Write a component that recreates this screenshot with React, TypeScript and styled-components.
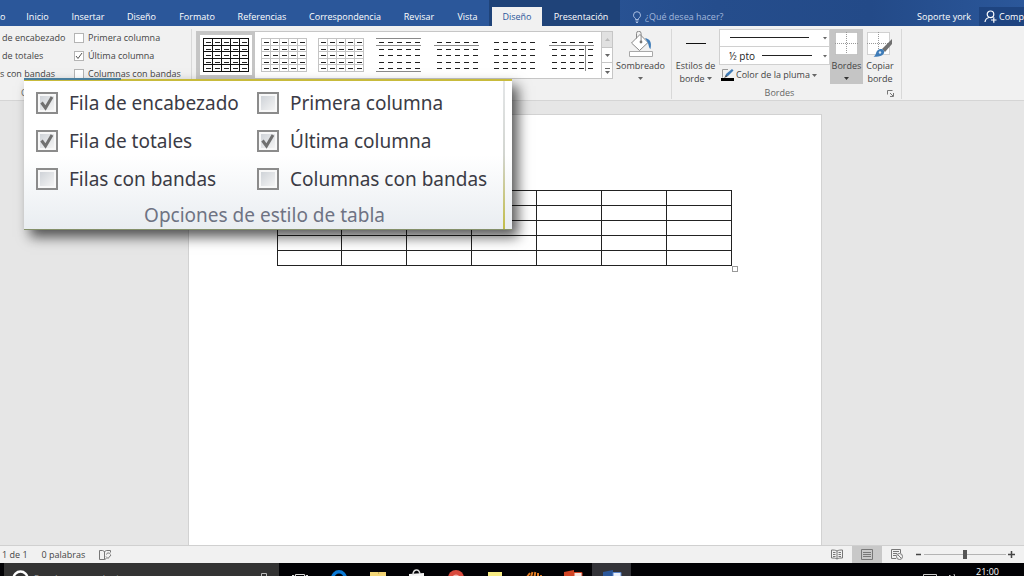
import React from "react";
import styled, { createGlobalStyle } from "styled-components";

const Global = createGlobalStyle`
  * { box-sizing: border-box; }
  body { margin: 0; overflow: hidden; }
  button, input, select { font: inherit; color: inherit; margin: 0; padding: 0; border: 0; background: none; }
  svg { display: block; flex-shrink: 0; }
`;

const Shell = styled.div`
  position: relative;
  display: flex;
  flex-direction: column;
  height: 100vh;
  overflow: hidden;
  background: #e6e6e6;
  color: #444;
  font: 9px/12px "Open Sans", "Noto Sans", sans-serif;
`;

/* ---------- tab bar ---------- */

const TabBar = styled.header`
  display: flex;
  flex: 0 0 26px;
  align-items: stretch;
  color: #fff;
  background: linear-gradient(90deg, #2b579a 50%, #254d8c 70%, #234a88 85%, #2b579a);
`;

const Tab = styled.button<{ $w: number }>`
  flex: 0 0 ${(p) => p.$w}px;
  padding-top: 7px;
  text-align: center;
  white-space: nowrap;
`;

const CutTab = styled(Tab)`
  text-align: left;
`;

const ContextTabs = styled.div`
  display: flex;
  padding: 7px 0 0 3px;
  background: #1f4379;
`;

const ContextTab = styled.button<{ $w: number; $active?: boolean }>`
  flex: 0 0 ${(p) => p.$w}px;
  text-align: center;
  color: ${(p) => (p.$active ? "#2b579a" : "#fff")};
  background: ${(p) => (p.$active ? "#f1f1f1" : "transparent")};
`;

const TellMe = styled.label`
  display: flex;
  flex: 1;
  align-items: center;
  gap: 2px;
  padding: 7px 0 0 11px;
  input {
    width: 90px;
    color: #a9bde0;
    outline: 0;
  }
  input::placeholder { color: #a2b7db; opacity: 1; }
`;

const Account = styled.button`
  padding: 7px 8px 0 0;
`;

const Share = styled.button`
  display: flex;
  flex: 0 0 45px;
  align-items: center;
  gap: 2px;
  margin-top: 7px;
  padding-left: 5px;
  overflow: hidden;
  background: #1e4480;
`;

/* ---------- ribbon ---------- */

const Ribbon = styled.section`
  display: flex;
  flex: 0 0 75px;
  padding-top: 3px;
  background: #f1f1f1;
  border-bottom: 1px solid #d5d5d5;
`;

const Group = styled.div<{ $w: number }>`
  display: flex;
  flex: 0 0 ${(p) => p.$w}px;
  flex-direction: column;
  justify-content: space-between;
  border-right: 1px solid #d8d8d8;
  margin-bottom: 1px;
`;

const GroupBody = styled.div`
  display: flex;
  align-items: flex-start;
`;

const Caption = styled.div`
  display: flex;
  align-items: center;
  justify-content: center;
  height: 12px;
  color: #666;
`;

const OptionsCaption = styled(Caption)`
  justify-content: flex-start;
  padding-left: 21px;
`;

const BordersCaption = styled(Caption)`
  display: grid;
  grid-template-columns: 1fr auto 1fr 14px;
  > span { grid-column: 2; }
  > button { grid-column: 4; }
`;

const OptionGrid = styled.div`
  display: grid;
  grid-template-columns: 74px 117px;
  grid-auto-rows: 18px;
  align-items: center;
  white-space: nowrap;
`;

const SmallOption = styled.label`
  display: flex;
  align-items: center;
  gap: 4px;
`;

const CutLabel = styled.span<{ $pad: number }>`
  padding-left: ${(p) => p.$pad}px;
`;

const CheckCell = styled.span`
  display: grid;
  place-items: center;
  > * { grid-area: 1 / 1; }
  svg { pointer-events: none; }
`;

const SmallBox = styled.input`
  appearance: none;
  width: 10px;
  height: 10px;
  background: #fff;
  border: 1px solid #b4b4b4;
`;

const Gallery = styled.div`
  display: flex;
  width: 417px;
  height: 48px;
  margin: 2px 0 0 4px;
  background: #fff;
  border: 1px solid #c6c6c6;
`;

const StyleThumb = styled.button<{ $selected?: boolean }>`
  display: flex;
  flex: 1;
  justify-content: center;
  min-width: 0;
  padding-top: 3px;
  border: 3px solid ${(p) => (p.$selected ? "#c5c5c5" : "transparent")};
`;

const Scroller = styled.div`
  display: flex;
  flex-direction: column;
  width: 11px;
  border-left: 1px solid #c6c6c6;
`;

const ScrollButton = styled.button<{ $off?: boolean }>`
  display: grid;
  place-items: center;
  flex: 1;
  background: ${(p) => (p.$off ? "#e1e1e1" : "#fff")};
  & + & { border-top: 1px solid #c6c6c6; }
`;

const BigButton = styled.button<{ $w: number; $active?: boolean }>`
  display: flex;
  flex-direction: column;
  align-items: center;
  width: ${(p) => p.$w}px;
  height: 55px;
  padding-top: 2px;
  line-height: 13px;
  white-space: nowrap;
  background: ${(p) => (p.$active ? "#c5c5c5" : "transparent")};
`;

const WithCaret = styled.span`
  display: flex;
  align-items: center;
  gap: 2px;
`;

const CaretLine = styled.span`
  display: grid;
  place-items: center;
  height: 12px;
`;

const PenColumn = styled.div`
  width: 111px;
`;

const SelectBox = styled.label`
  display: grid;
  height: 18px;
  align-items: center;
  background: #fff;
  border: 1px solid #d0d0d0;
  & + & { border-top: 0; }
  > * { grid-area: 1 / 1; }
  svg { pointer-events: none; }
`;

const Select = styled.select`
  appearance: none;
  width: 100%;
  height: 16px;
  padding-left: 9px;
  color: #222;
  font-size: 10px;
`;

const PenColor = styled.button`
  display: flex;
  align-items: center;
  gap: 2px;
  height: 20px;
  padding-left: 2px;
  white-space: nowrap;
`;

/* ---------- document ---------- */

const Workspace = styled.main`
  display: flex;
  flex: 1;
  justify-content: center;
  min-height: 0;
  padding: 13px 15px 0 0;
`;

const Page = styled.article`
  width: 634px;
  padding: 75px 83px 0 88px;
  background: #fff;
  border: 1px solid #d2d2d2;
  border-bottom: 0;
`;

const TableWrap = styled.div`
  display: flex;
  flex-direction: column;
  padding-right: 6px;
`;

const DocTable = styled.table`
  width: 100%;
  table-layout: fixed;
  border-collapse: collapse;
  td {
    height: 15px;
    padding: 0;
    border: 1px solid #222;
  }
`;

const ResizeHandle = styled.span`
  align-self: flex-end;
  width: 6px;
  height: 6px;
  margin-right: -6px;
  border: 1px solid #999;
`;

/* ---------- status bar and taskbar ---------- */

const StatusBar = styled.footer`
  display: flex;
  flex: 0 0 18px;
  align-items: center;
  padding: 0 9px 0 2px;
  background: #f1f1f1;
  border-top: 1px solid #d0d0d0;
`;

const StatusText = styled.span`
  margin-right: 14px;
`;

const ViewButton = styled.button<{ $active?: boolean }>`
  display: grid;
  place-items: center;
  width: 30px;
  height: 17px;
  background: ${(p) => (p.$active ? "#c8c8c8" : "transparent")};
`;

const Views = styled.div`
  display: flex;
  margin-left: auto;
`;

const ZoomControl = styled.div`
  display: flex;
  align-items: center;
  gap: 2px;
  padding-left: 3px;
`;

const ZoomRange = styled.input`
  appearance: none;
  width: 82px;
  height: 12px;
  background: linear-gradient(#b4b4b4, #b4b4b4) center / 100% 1px no-repeat;
  &::-webkit-slider-thumb {
    appearance: none;
    width: 4px;
    height: 9px;
    background: #555;
  }
`;

const Taskbar = styled.nav`
  display: flex;
  flex: 0 0 13px;
  align-items: flex-start;
  overflow: hidden;
  color: #fff;
  background: #020205;
`;

const SearchBox = styled.button`
  display: flex;
  align-items: flex-start;
  width: 275px;
  height: 13px;
  margin: 0 1px 0 4px;
  padding: 7px 8px 0 8px;
  gap: 5px;
  color: #a0a0a0;
  background: #333;
  > span { padding-top: 3px; }
  > svg:last-child { margin: 3px 4px 0 auto; }
`;

const TaskItem = styled.button<{ $active?: boolean }>`
  display: flex;
  justify-content: center;
  width: 39px;
  height: 13px;
  padding-top: 6px;
  overflow: hidden;
  background: ${(p) => (p.$active ? "#333338" : "transparent")};
`;

const Tray = styled.div`
  display: flex;
  align-items: flex-start;
  gap: 7px;
  margin-left: auto;
  padding: 3px 25px 0 0;
  > svg { margin-top: 8px; }
`;

const Clock = styled.time`
  padding-left: 13px;
`;

/* ---------- magnified options panel ---------- */

const Magnified = styled.section`
  position: absolute;
  top: 79px;
  left: 24px;
  width: 488px;
  padding: 3px 0 0 12px;
  color: #3b3b45;
  font: 19px/24px "Noto Sans", "Open Sans", sans-serif;
  background: linear-gradient(#fff 50%, #e9edf1);
  border-top: 2px solid #c8bb3c;
  border-bottom: 1px solid #84906a;
  box-shadow: 6px 7px 12px rgba(0, 0, 0, 0.65);
`;

const BlueEdge = styled.i`
  position: absolute;
  top: -3px;
  left: 0;
  width: 97px;
  height: 2px;
  background: #4a7f9e;
`;

const YellowEdge = styled.i`
  position: absolute;
  top: 0;
  bottom: 0;
  left: 479px;
  width: 2px;
  background: linear-gradient(#e4e6e8, #d2d5d0 50%, #c2bd4a);
`;

const MagnifiedGrid = styled.div`
  display: grid;
  grid-template-columns: 221px 1fr;
  grid-auto-rows: 38px;
`;

const BigOption = styled.label`
  display: flex;
  align-items: center;
  gap: 11px;
  white-space: nowrap;
`;

const BigBox = styled.input`
  appearance: none;
  width: 22px;
  height: 22px;
  border: 2px solid #8b8b8b;
  padding: 2px;
  background:
    linear-gradient(135deg, #cfd3d8, #f4f4f4) content-box,
    #f8f8f8;
`;

const MagnifiedCaption = styled.div`
  height: 31px;
  padding: 5px 19px 0 0;
  text-align: center;
  color: #6e7383;
`;

/* ---------- drawings ---------- */

const Caret = ({ color = "#666" }: { color?: string }) => (
  <svg width="5" height="3" viewBox="0 0 5 3"><path d="M0 0h5L2.5 3z" fill={color} /></svg>
);

function Thumb({ kind }: { kind: number }) {
  const rows = [3, 10, 16, 23, 29];
  const cols = [0, 1, 2, 3, 4];
  const grid = kind < 3;
  const stroke = kind === 0 ? "#111" : grid ? "#c4c4c4" : "#8a8a8a";
  return (
    <svg width="46" height="34" viewBox="0 0 46 34" shapeRendering="crispEdges">
      {grid && (
        <g stroke={stroke} fill="none">
          {[0, 7, 13, 20, 26, 33].map((y) => <path key={y} d={`M0 ${y + 0.5}h46`} />)}
          {[0, 9, 18, 27, 36, 45].map((x) => <path key={x} d={`M${x + 0.5} 0v34`} />)}
        </g>
      )}
      {kind === 3 && <path d="M0 .5h45M0 7.5h45M0 33.5h45" stroke={stroke} />}
      {(kind === 4 || kind === 6) && <path d="M0 7.5h45" stroke={stroke} />}
      {kind === 6 && <path d="M36.500 7v26" stroke={stroke} />}
      {rows.map((y) => cols.map((c) => (
        <path key={`${y}-${c}`} d={`M${c * 9 + 3} ${y + 1.5}h5`} stroke="#222" />
      )))}
    </svg>
  );
}

const BulbIcon = () => (
  <svg width="12" height="12" viewBox="0 0 12 12" fill="none" stroke="#a9bde0">
    <path d="M4.500 8.500V7.400C3.200 6.600 2.500 5.600 2.500 4.200a3.500 3.500 0 0 1 7 0c0 1.400-.7 2.400-2 3.200v1.100zM4.500 10h3M5 11.500h2" />
  </svg>
);

const PersonIcon = () => (
  <svg width="13" height="13" viewBox="0 0 13 13" fill="none" stroke="#fff" strokeWidth="1.200">
    <circle cx="6.500" cy="4.300" r="3.300" />
    <path d="M1 12c.3-2.500 1.700-4 4-4.500M7 10h5.500M9.800 7.300v5.400" />
  </svg>
);

const BucketIcon = () => (
  <svg width="26" height="28" viewBox="0 0 26 28" fill="none">
    <path d="M1.500 20.500h23v5h-23z" fill="#fff" stroke="#a8a8a8" />
    <path d="M3.500 12L12 3.500l8 8-8.500 8z" fill="#fff" stroke="#888" />
    <path d="M8.500 7.500V2.500a2.300 2.300 0 0 1 4.600 0V10" stroke="#888" />
    <circle cx="13" cy="11" r="1.400" fill="#777" />
    <path d="M17 7c5 1 7 4 5.500 11-1.500-.4-1.500-3-2.500-6z" fill="#3f7cb8" />
  </svg>
);

const BordersIcon = () => (
  <svg width="24" height="28" viewBox="0 0 24 28">
    <path d="M.5 1.500h22v22h-22z" fill="#fff" stroke="#aaa" strokeDasharray="1 1" />
    <path d="M11.500 1v22M0 12.500h23" stroke="#999" strokeDasharray="1 1" />
  </svg>
);

const CopyBorderIcon = () => (
  <svg width="26" height="28" viewBox="0 0 26 28">
    <path d="M.5 1.500h22v22h-22z" fill="#fff" stroke="#aaa" strokeDasharray="1 1" />
    <path d="M11.500 1v22M0 12.500h23" stroke="#999" strokeDasharray="1 1" />
    <path d="M25 8v5l-7 8-3-3z" fill="#707070" />
    <path d="M14.500 18c2.500.7 3.500 3 2 5-2 2.500-6 3-10 2.500 3-1 2-5 4.500-6.500 1-.8 2-1.200 3.500-1z" fill="#3f7cb8" />
    <circle cx="13" cy="21.500" r="1.200" fill="#dce9f5" />
  </svg>
);

const StyleLineIcon = () => (
  <svg width="22" height="28" viewBox="0 0 22 28" shapeRendering="crispEdges"><path d="M1 12h20" stroke="#111" strokeWidth="1" /></svg>
);

const PenIcon = () => (
  <svg width="13" height="14" viewBox="0 0 13 14">
    <path d="M7 1.500H1.500v8" fill="none" stroke="#999" />
    <path d="M4 9l1-3 6-5 1.500 1.500L7 8z" fill="#3f7cb8" />
    <path d="M3 10l2-3 1.500 1.500z" fill="#555" />
    <path d="M0 10h13v3H0z" fill="#000" />
  </svg>
);

const LauncherIcon = () => (
  <svg width="7" height="7" viewBox="0 0 7 7" fill="none" stroke="#777">
    <path d="M.5 4.500v-4h5M3 3l3 3M6.500 3v3.500H3" />
  </svg>
);

const ProofIcon = () => (
  <svg width="13" height="12" viewBox="0 0 13 12" fill="none" stroke="#777">
    <path d="M5.500 10.500h-5v-9h3l2 1zM5.500 2.500l2-1h4v2" />
    <path d="M5.500 10.500l2-1M7 7.500l2 2 3-3.500M7.500 5.500c0-2 3.500-2 4 0" />
  </svg>
);

const ReadIcon = () => (
  <svg width="12" height="11" viewBox="0 0 12 11" fill="none" stroke="#777">
    <path d="M6 2c-1.500-1-3.500-1-5.500-1v8c2 0 4 0 5.500 1 1.500-1 3.500-1 5.500-1V1c-2 0-4 0-5.500 1zv8M2 3.500h2.500M2 5.500h2.500M2 7.500h2.500M7.500 3.500H10M7.500 5.500H10M7.500 7.500H10" />
  </svg>
);

const PrintIcon = () => (
  <svg width="12" height="11" viewBox="0 0 12 11" fill="none" stroke="#777">
    <path d="M.5.5h11v10H.5zM2 3.500h8M2 5.500h8M2 7.500h8" />
  </svg>
);

const WebIcon = () => (
  <svg width="12" height="11" viewBox="0 0 12 11" fill="none" stroke="#777">
    <path d="M5 9.500H.5v-9h9V4M2 2.500h6M2 4.500h4M2 6.500h3" />
    <circle cx="8.500" cy="7.500" r="3" />
    <path d="M7 6l3 3" />
  </svg>
);

const SelectArt = ({ from, to }: { from: number; to: number }) => (
  <svg width="109" height="16" viewBox="0 0 109 16">
    <path d={`M${from} 7.500H${to}`} stroke="#222" />
    <path d="M103 7h4l-2 2.500z" fill="#666" />
  </svg>
);

const taskApps = [
  { name: "Vista de tareas", icon: <svg width="18" height="18" viewBox="0 0 18 18" fill="none" stroke="#ddd"><path d="M4.500 5.500h9v8h-9zM1 6.500h2v6M17 6.500h-2v6" /></svg> },
  { name: "Edge", icon: <svg width="18" height="18" viewBox="0 0 18 18" fill="none" stroke="#0a78d4" strokeWidth="3.500"><circle cx="9" cy="9" r="6.200" /></svg> },
  { name: "Explorador", icon: <svg width="18" height="18" viewBox="0 0 18 18"><path d="M1 3h8l1 2h7v11H1z" fill="#f3d778" /><path d="M9 3h8v2h-7z" fill="#f0d070" /></svg> },
  { name: "Tienda", icon: <svg width="18" height="18" viewBox="0 0 18 18"><path d="M1 5l15-1v12H1z" fill="#f4f4f4" /><path d="M5 6c0-6 6-7 7-1" fill="none" stroke="#ddd" strokeWidth="1.500" /></svg> },
  { name: "Chrome", icon: <svg width="18" height="18" viewBox="0 0 18 18"><circle cx="9" cy="9" r="8" fill="#d94a3d" /><circle cx="9" cy="9" r="3.500" fill="#f0b0a8" /></svg> },
  { name: "Notas", icon: <svg width="18" height="18" viewBox="0 0 18 18"><path d="M2 3h14v13H2z" fill="#f7ec84" /></svg> },
  { name: "Aplicación", icon: <svg width="18" height="18" viewBox="0 0 18 18" fill="none" stroke="#e07b22" strokeWidth="2"><path d="M2 8l3-4M6 8l1.500-5M9.500 8l.8-5M13 8V4M16 9V6" /></svg> },
  { name: "PowerPoint", icon: <svg width="20" height="18" viewBox="0 0 20 18"><path d="M1 3l10-2v16L1 15z" fill="#d14424" /><path d="M11 3.500h8v12h-8z" fill="#f4e4de" stroke="#d14424" /></svg> },
  { name: "Word", icon: <svg width="20" height="18" viewBox="0 0 20 18"><path d="M1 3l10-2v16L1 15z" fill="#2b579a" /><path d="M11 3.500h8v12h-8z" fill="#e9effa" stroke="#5b85c8" /></svg> },
];

const tabs: [string, number][] = [
  ["Inicio", 47], ["Insertar", 54], ["Diseño", 53], ["Formato", 58], ["Referencias", 72],
  ["Correspondencia", 94], ["Revisar", 54], ["Vista", 43],
];

function SmallCheck({ label, checked }: { label: string; checked?: boolean }) {
  return (
    <SmallOption>
      <CheckCell>
        <SmallBox type="checkbox" defaultChecked={checked} />
        {checked && <svg width="8" height="8" viewBox="0 0 8 8"><path d="M1 4l2 2.500L7 1" fill="none" stroke="#555" /></svg>}
      </CheckCell>
      {label}
    </SmallOption>
  );
}

function BigCheck({ label, checked }: { label: string; checked?: boolean }) {
  return (
    <BigOption>
      <CheckCell>
        <BigBox type="checkbox" defaultChecked={checked} />
        {checked && (
          <svg width="16" height="16" viewBox="0 0 16 16">
            <path d="M2.500 7.500l4 5.500L13 2" fill="none" stroke="#707070" strokeWidth="3" />
          </svg>
        )}
      </CheckCell>
      {label}
    </BigOption>
  );
}

export default function App() {
  return (
    <Shell>
      <Global />
      <TabBar>
        <CutTab $w={14}>o</CutTab>
        {tabs.map(([name, w], i) => <Tab key={i} $w={w}>{name}</Tab>)}
        <ContextTabs>
          <ContextTab $w={50} $active>Diseño</ContextTab>
          <ContextTab $w={78}>Presentación</ContextTab>
        </ContextTabs>
        <TellMe>
          <BulbIcon />
          <input aria-label="¿Qué desea hacer?" placeholder="¿Qué desea hacer?" />
        </TellMe>
        <Account>Soporte york</Account>
        <Share aria-label="Compartir"><PersonIcon />Comp</Share>
      </TabBar>

      <Ribbon>
        <Group $w={192}>
          <OptionGrid>
            <CutLabel $pad={2}>de encabezado</CutLabel>
            <SmallCheck label="Primera columna" />
            <CutLabel $pad={2}>de totales</CutLabel>
            <SmallCheck label="Última columna" checked />
            <CutLabel $pad={0}>s con bandas</CutLabel>
            <SmallCheck label="Columnas con bandas" />
          </OptionGrid>
          <OptionsCaption>Opciones</OptionsCaption>
        </Group>

        <Group $w={480}>
          <GroupBody>
            <Gallery>
              {[0, 1, 2, 3, 4, 5, 6].map((k) => (
                <StyleThumb key={k} $selected={k === 0} aria-label={`Estilo ${k + 1}`}><Thumb kind={k} /></StyleThumb>
              ))}
              <Scroller>
                <ScrollButton $off aria-label="Subir">
                  <svg width="5" height="3" viewBox="0 0 5 3"><path d="M0 3h5L2.500 0z" fill="#bbb" /></svg>
                </ScrollButton>
                <ScrollButton aria-label="Bajar"><Caret /></ScrollButton>
                <ScrollButton aria-label="Más">
                  <svg width="5" height="6" viewBox="0 0 5 6"><path d="M0 .5h5" stroke="#666" /><path d="M0 3h5L2.500 6z" fill="#666" /></svg>
                </ScrollButton>
              </Scroller>
            </Gallery>
            <BigButton $w={55}>
              <BucketIcon />
              Sombreado
              <CaretLine><Caret /></CaretLine>
            </BigButton>
          </GroupBody>
        </Group>

        <Group $w={230}>
          <GroupBody>
            <BigButton $w={47}>
              <StyleLineIcon />
              Estilos de
              <WithCaret>borde <Caret /></WithCaret>
            </BigButton>
            <PenColumn>
              <SelectBox>
                <Select aria-label="Estilo de pluma"><option></option></Select>
                <SelectArt from={10} to={89} />
              </SelectBox>
              <SelectBox>
                <Select aria-label="Grosor de pluma"><option>½ pto</option></Select>
                <SelectArt from={42} to={92} />
              </SelectBox>
              <PenColor><PenIcon />Color de la pluma<Caret /></PenColor>
            </PenColumn>
            <BigButton $w={33} $active>
              <BordersIcon />
              Bordes
              <CaretLine><Caret color="#333" /></CaretLine>
            </BigButton>
            <BigButton $w={34}>
              <CopyBorderIcon />
              Copiar
              <span>borde</span>
            </BigButton>
          </GroupBody>
          <BordersCaption>
            <span>Bordes</span>
            <button aria-label="Más opciones de bordes"><LauncherIcon /></button>
          </BordersCaption>
        </Group>
      </Ribbon>

      <Workspace>
        <Page>
          <TableWrap>
            <DocTable>
              <tbody>
                {[0, 1, 2, 3, 4].map((r) => (
                  <tr key={r}>{[0, 1, 2, 3, 4, 5, 6].map((c) => <td key={c} />)}</tr>
                ))}
              </tbody>
            </DocTable>
            <ResizeHandle />
          </TableWrap>
        </Page>
      </Workspace>

      <StatusBar>
        <StatusText>1 de 1</StatusText>
        <StatusText>0 palabras</StatusText>
        <ProofIcon />
        <Views>
          <ViewButton aria-label="Modo de lectura"><ReadIcon /></ViewButton>
          <ViewButton $active aria-label="Diseño de impresión"><PrintIcon /></ViewButton>
          <ViewButton aria-label="Diseño web"><WebIcon /></ViewButton>
        </Views>
        <ZoomControl>
          <button aria-label="Alejar"><svg width="7" height="7" viewBox="0 0 7 7"><path d="M1 3.500h5" stroke="#444" strokeWidth="1.500" /></svg></button>
          <ZoomRange type="range" aria-label="Zoom" defaultValue={50} />
          <button aria-label="Acercar"><svg width="7" height="7" viewBox="0 0 7 7"><path d="M0 3.500h7M3.500 0v7" stroke="#444" strokeWidth="1.500" /></svg></button>
        </ZoomControl>
      </StatusBar>

      <Taskbar>
        <SearchBox aria-label="Buscar">
          <svg width="17" height="17" viewBox="0 0 17 17"><circle cx="8.500" cy="8.500" r="7" fill="none" stroke="#fff" strokeWidth="2.400" /></svg>
          <span>Pregúntame cualquier cosa</span>
          <svg width="6" height="10" viewBox="0 0 6 10"><path d="M.5 .5h5v7h-5z" fill="none" stroke="#bbb" /></svg>
        </SearchBox>
        {taskApps.map(({ name, icon }) => (
          <TaskItem key={name} $active={name === "Word"} aria-label={name}>{icon}</TaskItem>
        ))}
        <Tray>
          <svg width="14" height="10" viewBox="0 0 14 10" fill="none" stroke="#ccc"><path d="M.5.5h13v8H.5zM3 2.500h8" /></svg>
          <svg width="12" height="10" viewBox="0 0 12 10" fill="none" stroke="#ccc"><path d="M1 4h2l3-3v8L3 6H1zM8 2q2 3 0 6M10 0q3 5 0 10" /></svg>
          <Clock>21:00</Clock>
        </Tray>
      </Taskbar>

      <Magnified>
        <BlueEdge />
        <YellowEdge />
        <MagnifiedGrid>
          <BigCheck label="Fila de encabezado" checked />
          <BigCheck label="Primera columna" />
          <BigCheck label="Fila de totales" checked />
          <BigCheck label="Última columna" checked />
          <BigCheck label="Filas con bandas" />
          <BigCheck label="Columnas con bandas" />
        </MagnifiedGrid>
        <MagnifiedCaption>Opciones de estilo de tabla</MagnifiedCaption>
      </Magnified>
    </Shell>
  );
}
